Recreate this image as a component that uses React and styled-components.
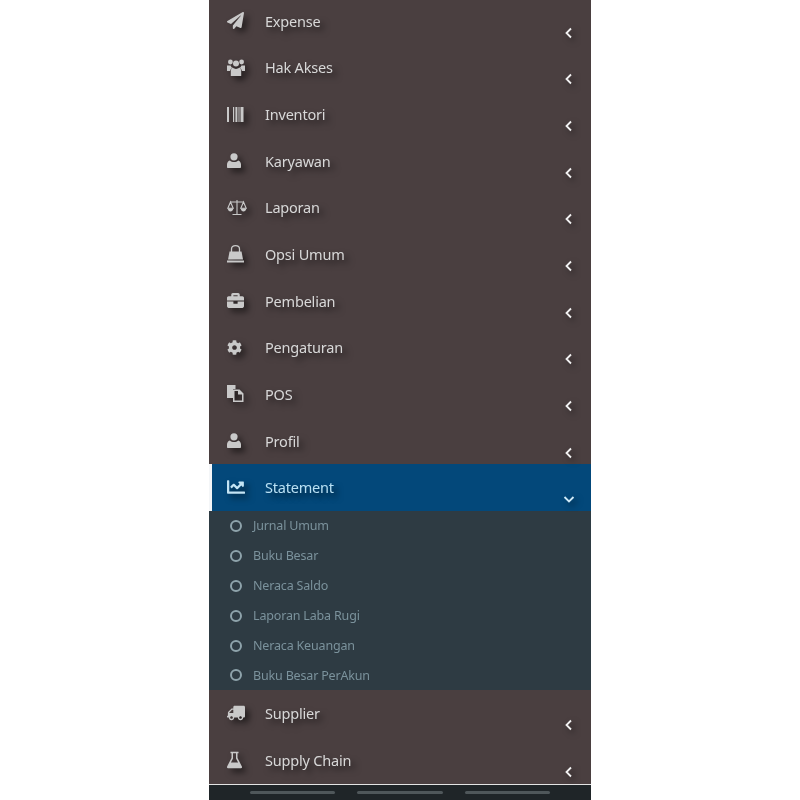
import React from 'react';
import styled, { createGlobalStyle } from 'styled-components';
import { FaPaperPlane, FaBriefcase, FaCog, FaChartLine, FaTruck } from 'react-icons/fa';

const GlobalStyle = createGlobalStyle`
  html, body {
    margin: 0;
    padding: 0;
    height: 100%;
    background: #fff;
    overflow: hidden;
  }
`;

const Page = styled.div`
  width: 800px;
  height: 800px;
  display: flex;
  padding-left: 209px;
  box-sizing: border-box;
  font-family: "Noto Sans", "Open Sans", sans-serif;
`;

const Phone = styled.div`
  width: 382px;
  height: 800px;
  display: flex;
  flex-direction: column;
  overflow: hidden;
  background: #4a3f40;
`;

const Menu = styled.ul`
  flex: 1;
  min-height: 0;
  margin: -2.5px 0 0;
  padding: 0;
  list-style: none;
  filter: blur(0.4px);
`;

const Row = styled.li`
  height: 46.65px;
  box-sizing: border-box;
  display: flex;
  align-items: center;
  padding: 0 16px 0 ${(p) => (p.$active ? '15px' : '18px')};
  background: ${(p) => (p.$active ? '#03487a' : 'transparent')};
  border-left: ${(p) => (p.$active ? '3px solid #f4f6f8' : 'none')};
  color: ${(p) => (p.$active ? '#b8e0f4' : '#d8d8d8')};
`;

const IconSlot = styled.span`
  width: 38px;
  height: 20px;
  flex: none;
  display: flex;
  align-items: center;
  color: ${(p) => (p.$active ? '#c4e4f4' : '#c9c9c9')};
  filter: drop-shadow(4px 4px 3px rgba(0, 0, 0, 0.55));
`;

const FlipIcon = styled.span`
  display: flex;
  transform: scaleX(-1);
`;

const Label = styled.span`
  flex: 1;
  font-size: 14.5px;
  letter-spacing: -0.2px;
  text-shadow: 4px 4px 6px rgba(0, 0, 0, 0.6);
`;

const Chevron = styled.span`
  display: flex;
  width: 12px;
  justify-content: center;
  margin-top: 24px;
  color: ${(p) => (p.$active ? '#cfeaf8' : '#f2f2f2')};
  filter: drop-shadow(3px 3px 3px rgba(0, 0, 0, 0.5));
`;

const SubMenu = styled.ul`
  margin: 0;
  padding: 0;
  list-style: none;
  background: #2e3b43;
`;

const SubRow = styled.li`
  height: 29.9px;
  box-sizing: border-box;
  padding: 1px 0 0 21px;
  display: flex;
  align-items: center;
  gap: 11px;
  font-size: 12.5px;
  letter-spacing: -0.17px;
  color: #7b929c;
`;

const Dot = styled.span`
  width: 12px;
  height: 12px;
  box-sizing: border-box;
  border: 2px solid #8ea3ab;
  border-radius: 50%;
`;

const NavBar = styled.div`
  flex: none;
  height: 16px;
  box-sizing: border-box;
  border-top: 1px solid #e4e4e4;
  background: #1f2528;
  display: flex;
  align-items: center;
  gap: 22px;
  padding: 0 41px;
  filter: blur(0.3px);
`;

const NavPill = styled.span`
  flex: 1;
  height: 3px;
  border-radius: 2px;
  background: #4f575a;
`;

const UsersIcon = () => (
  <svg width="18" height="17" viewBox="0 0 18 17" fill="currentColor">
    <circle cx="3.4" cy="3" r="2.4" />
    <circle cx="14.6" cy="3" r="2.4" />
    <circle cx="9" cy="4.4" r="3" />
    <path d="M0 6.5h3.6c.5 1.2 1 2 1.6 2.6-1.2.7-1.9 1.7-2.1 3H0zM18 6.5h-3.6c-.5 1.2-1 2-1.6 2.6 1.2.7 1.9 1.7 2.1 3H18z" />
    <path d="M5.8 8.6c1 1 2 1.4 3.2 1.4s2.2-.4 3.2-1.4c1.3.6 2 2 2 3.8V17H3.8v-4.600c0-1.800.7-3.200 2-3.800z" />
  </svg>
);

const BarcodeIcon = () => (
  <svg width="17" height="15" viewBox="0 0 17 15" fill="currentColor">
    <rect x="0" y="0" width="2" height="15" />
    <rect x="6" y="0" width="1.2" height="15" />
    <rect x="8.4" y="0" width="2" height="15" />
    <rect x="11.5" y="0" width="1" height="15" />
    <rect x="13.5" y="0" width="3" height="15" />
  </svg>
);

const UserIcon = () => (
  <svg width="14" height="15" viewBox="0 0 14 15" fill="currentColor">
    <circle cx="7" cy="3.8" r="3.6" />
    <path d="M2.8 7.4C4 8.5 5.4 9 7 9s3-.5 4.2-1.6c1.700.5 2.800 2 2.800 4.100V14c0 .6-.4 1-1 1H1c-.6 0-1-.4-1-1v-2.500c0-2.100 1.100-3.600 2.800-4.100z" />
  </svg>
);

const ScaleIcon = () => (
  <svg width="20" height="17" viewBox="0 0 20 17" fill="none" stroke="currentColor" strokeWidth="1.1">
    <path d="M10 1v14M5.5 15.500h9M3.500 3h13" />
    <path d="M3.500 3 .8 9.200h5.400zM16.500 3l-2.700 6.200h5.400z" />
    <path d="M.6 9.500c.4 2 1.500 3 2.900 3s2.500-1 2.900-3zM13.600 9.500c.4 2 1.500 3 2.900 3s2.500-1 2.900-3z" fill="currentColor" stroke="none" />
  </svg>
);

const BagIcon = () => (
  <svg width="17" height="18" viewBox="0 0 17 18" fill="currentColor">
    <path d="M4.500 7V4c0-2.200 1.500-3.300 4-3.300s4 1.100 4 3.300v3" fill="none" stroke="currentColor" strokeWidth="1.300" />
    <path d="M2.500 6.500h12L16 14.500H1z" />
    <rect x="0" y="15.500" width="17" height="2" />
  </svg>
);

const FilesIcon = () => (
  <svg width="17" height="17" viewBox="0 0 17 17" fill="currentColor">
    <path d="M0 0h8.500v4H6v9H0z" />
    <path d="M6 4.500h6.500L16.500 8.500V17H6zM7.500 6v9.500h7.500V9.500h-4V6z" fillRule="evenodd" />
  </svg>
);

const FlaskIcon = () => (
  <svg width="15" height="18" viewBox="0 0 15 18" fill="currentColor">
    <path d="M3.500 0.700h8v1.500h-1V7l4.400 8.600c.4.900-.1 1.700-1 1.700H1.100c-.9 0-1.400-.8-1-1.700L4.500 7V2.200h-1zM6 2.200v5.200L3.900 11.500h7.200L9 7.400V2.200z" fillRule="evenodd" />
  </svg>
);

const AngleLeft = () => (
  <svg width="12" height="12" viewBox="0 0 12 12" fill="none" stroke="currentColor" strokeWidth="1.8">
    <path d="M8 1.500 3.500 6 8 10.500" />
  </svg>
);

const AngleDown = () => (
  <svg width="12" height="12" viewBox="0 0 12 12" fill="none" stroke="currentColor" strokeWidth="1.8">
    <path d="M1.500 4 6 8.500 10.500 4" />
  </svg>
);

const icon = (node) => () => node;

const before = [
  ['Expense', icon(<FaPaperPlane size={17} />)],
  ['Hak Akses', UsersIcon],
  ['Inventori', BarcodeIcon],
  ['Karyawan', UserIcon],
  ['Laporan', ScaleIcon],
  ['Opsi Umum', BagIcon],
  ['Pembelian', icon(<FaBriefcase size={17} />)],
  ['Pengaturan', icon(<FaCog size={15} />)],
  ['POS', FilesIcon],
  ['Profil', UserIcon],
];

const after = [
  ['Supplier', icon(<FlipIcon><FaTruck size={18} /></FlipIcon>)],
  ['Supply Chain', FlaskIcon],
];

const subItems = [
  'Jurnal Umum',
  'Buku Besar',
  'Neraca Saldo',
  'Laporan Laba Rugi',
  'Neraca Keuangan',
  'Buku Besar PerAkun',
];

function MenuRow({ label, icon: Icon, active }) {
  return (
    <Row $active={active}>
      <IconSlot $active={active}><Icon /></IconSlot>
      <Label>{label}</Label>
      <Chevron $active={active}>{active ? <AngleDown /> : <AngleLeft />}</Chevron>
    </Row>
  );
}

export default function App() {
  return (
    <Page>
      <GlobalStyle />
      <Phone>
        <Menu>
          {before.map(([label, ic]) => (
            <MenuRow key={label} label={label} icon={ic} />
          ))}
          <MenuRow label="Statement" icon={icon(<FaChartLine size={18} />)} active />
          <SubMenu>
            {subItems.map((item) => (
              <SubRow key={item}><Dot />{item}</SubRow>
            ))}
          </SubMenu>
          {after.map(([label, ic]) => (
            <MenuRow key={label} label={label} icon={ic} />
          ))}
        </Menu>
        <NavBar>
          <NavPill />
          <NavPill />
          <NavPill />
        </NavBar>
      </Phone>
    </Page>
  );
}
